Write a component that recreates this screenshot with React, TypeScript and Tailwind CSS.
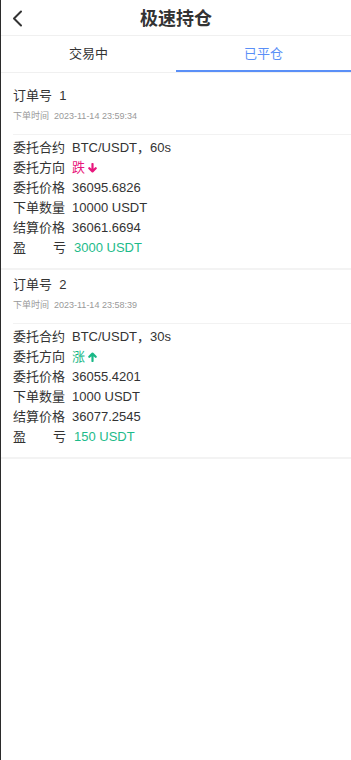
import React from "react";

type Order = {
  no: string;
  time: string;
  contract: string;
  dir: "up" | "down";
  price: string;
  qty: string;
  settle: string;
  pnl: string;
};

const orders: Order[] = [
  { no: "1", time: "2023-11-14 23:59:34", contract: "BTC/USDT，60s", dir: "down", price: "36095.6826", qty: "10000 USDT", settle: "36061.6694", pnl: "3000 USDT" },
  { no: "2", time: "2023-11-14 23:58:39", contract: "BTC/USDT，30s", dir: "up", price: "36055.4201", qty: "1000 USDT", settle: "36077.2545", pnl: "150 USDT" },
];

function Row({ label, children }: { label: React.ReactNode; children: React.ReactNode }) {
  return (
    <div className="flex h-[20px] items-center text-[13px] leading-[20px] text-[#333]">
      <div className="w-[59px] shrink-0">{label}</div>
      <div className="flex items-center">{children}</div>
    </div>
  );
}

function Card({ o }: { o: Order }) {
  return (
    <div className="border-b-2 border-[#f3f3f3]">
      <div className="px-3 pt-[5px]">
        <div className="h-[20px] text-[13px] leading-[20px] text-[#333]">订单号&nbsp;&nbsp;{o.no}</div>
        <div className="h-[20px] text-[9px] leading-[20px] text-[#999]">
          下单时间&nbsp;&nbsp;<span className="text-[#999]">{o.time}</span>
        </div>
      </div>
      <div className="ml-3 mt-[8px] border-t border-[#f2f2f2]" />
      <div className="px-3 pt-[3px] pb-[10px]">
        <Row label="委托合约">{o.contract}</Row>
        <Row label="委托方向">
          {o.dir === "down" ? (
            <span className="flex items-center text-[#e8177d]">
              跌
              <svg className="ml-[3px]" width="9" height="10" viewBox="0 0 9 10">
                <path d="M4.5 1v7M1.3 5.2 4.5 8.4 7.7 5.2" stroke="#e8177d" strokeWidth="2.2" fill="none" strokeLinecap="round" strokeLinejoin="round" />
              </svg>
            </span>
          ) : (
            <span className="flex items-center text-[#19b886]">
              涨
              <svg className="ml-[3px]" width="9" height="10" viewBox="0 0 9 10">
                <path d="M4.5 9V2M1.3 4.8 4.5 1.6 7.7 4.8" stroke="#19b886" strokeWidth="2.2" fill="none" strokeLinecap="round" strokeLinejoin="round" />
              </svg>
            </span>
          )}
        </Row>
        <Row label="委托价格">{o.price}</Row>
        <Row label="下单数量">{o.qty}</Row>
        <Row label="结算价格">{o.settle}</Row>
        <Row
          label={
            <div className="flex w-[53px] justify-between">
              <span>盈</span>
              <span>亏</span>
            </div>
          }
        >
          <span className="ml-[2px] text-[#1dbb8a]">{o.pnl}</span>
        </Row>
      </div>
    </div>
  );
}

export default function App() {
  return (
    <div
      className="min-h-[760px] w-full border-l border-[#2b2b2b] bg-white"
      style={{ fontFamily: '"Liberation Sans", "Noto Sans CJK SC", sans-serif' }}
    >
      <div className="relative flex h-[36px] items-center justify-center border-b border-[#f0f0f0]">
        <svg className="absolute left-[10px] top-[10px]" width="14" height="17" viewBox="0 0 14 17">
          <path d="M10 1.5 3 8.5l7 7" stroke="#333" strokeWidth="2" fill="none" strokeLinecap="round" strokeLinejoin="round" />
        </svg>
        <div className="text-[18px] font-bold text-[#333]" style={{ fontFamily: '"Noto Sans CJK SC", sans-serif' }}>
          极速持仓
        </div>
      </div>
      <div className="flex h-[37px] border-b border-[#f0f0f0] text-[13px]">
        <div className="flex flex-1 items-center justify-center text-[#333]">交易中</div>
        <div className="flex flex-1 items-center justify-center border-b-2 border-[#5a8ff7] pt-[2px] text-[#5a8ff7]">已平仓</div>
      </div>
      <div className="pt-[8px]">
        {orders.map((o) => (
          <Card key={o.no} o={o} />
        ))}
      </div>
    </div>
  );
}
